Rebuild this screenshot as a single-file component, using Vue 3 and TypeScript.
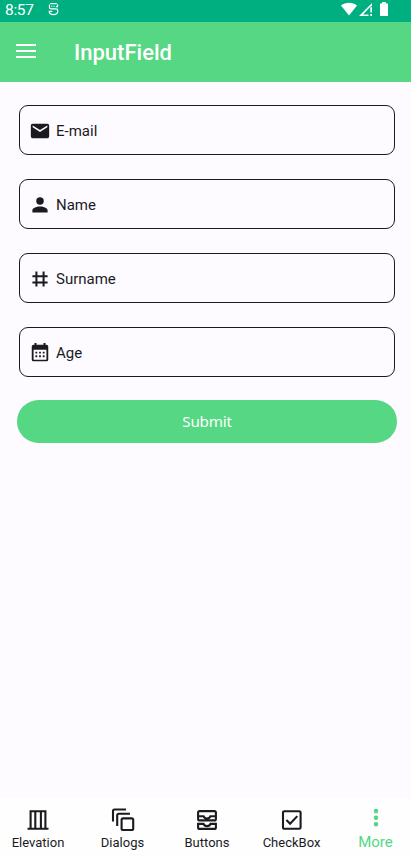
<script setup lang="ts">
interface Field { label: string; icon: string }
interface Tab { label: string; icon: string; outlined?: boolean; active?: boolean }

const fields: Field[] = [
  { label: 'E-mail', icon: 'M20 8l-8 5-8-5V6l8 5 8-5m0-2H4c-1.11 0-2 .89-2 2v12a2 2 0 0 0 2 2h16a2 2 0 0 0 2-2V6a2 2 0 0 0-2-2z' },
  { label: 'Name', icon: 'M12 3.6a4.1 4.1 0 1 1 0 8.2 4.1 4.1 0 0 1 0-8.2zm0 10c4.6 0 8.3 1.9 8.3 4.2v2.4H3.7v-2.4c0-2.3 3.7-4.2 8.3-4.2z' },
  { label: 'Surname', icon: 'M7 3.8h2.2V8h5.6V3.8H17V8h3.3v2.2H17v4.6h3.3V17H17v3.2h-2.2V17H9.2v3.2H7V17H3.7v-2.2H7v-4.6H3.7V8H7zm2.2 6.4v4.6h5.6v-4.6z' },
  { label: 'Age', icon: 'M19 19.3H5V8.5h14M19 3h-1V1h-2.2v2H8.2V1H6v2H5a2 2 0 0 0-2 2v14a2 2 0 0 0 2 2h14a2 2 0 0 0 2-2V5a2 2 0 0 0-2-2zM7 10.5h2v2H7zm4 0h2v2h-2zm4 0h2v2h-2zM7 14.5h2v2H7zm4 0h2v2h-2zm4 0h2v2h-2z' },
]

const tabs: Tab[] = [
  { label: 'Elevation', outlined: true, icon: 'M1.5 20.8h21M4.6 20V3.2h14.8V20M9.3 3v17M14.9 3v17' },
  { label: 'Dialogs', outlined: true, icon: 'M2 13.5V3a1.5 1.5 0 0 1 1.5-1.5H15M6.2 18V7.3a1.6 1.6 0 0 1 1.6-1.6H19M12.2 10.4h8.4a1.6 1.6 0 0 1 1.6 1.6v8.4a1.6 1.6 0 0 1-1.6 1.6h-8.4a1.6 1.6 0 0 1-1.6-1.6V12a1.6 1.6 0 0 1 1.6-1.6z' },
  { label: 'Buttons', outlined: true, icon: 'M4.6 3.1h14.8a1.5 1.5 0 0 1 1.5 1.5v6.3a1.5 1.5 0 0 1-1.5 1.5H4.6a1.5 1.5 0 0 1-1.5-1.5V4.6a1.5 1.5 0 0 1 1.5-1.5zM3.1 8.2h5.4c.5 1.5 1.7 2.3 3.5 2.3s3-.8 3.5-2.3h5.4M3.1 15.9h5.4c.5 1.5 1.7 2.2 3.5 2.2s3-.7 3.5-2.2h5.4v3.5a1.5 1.5 0 0 1-1.5 1.5H4.6a1.5 1.5 0 0 1-1.5-1.5z' },
  { label: 'CheckBox', outlined: true, icon: 'M4.4 3.2h14.8a1.4 1.4 0 0 1 1.4 1.4v14.8a1.4 1.4 0 0 1-1.4 1.4H4.4a1.4 1.4 0 0 1-1.4-1.4V4.6a1.4 1.4 0 0 1 1.4-1.4zM6.4 12l3.7 3.7 7.2-7.6' },
  { label: 'More', active: true, icon: 'M12 2.8a2.3 2.3 0 1 1 0 4.6 2.3 2.3 0 0 1 0-4.6zm0 6.6a2.3 2.3 0 1 1 0 4.6 2.3 2.3 0 0 1 0-4.6zm0 6.6a2.3 2.3 0 1 1 0 4.6 2.3 2.3 0 0 1 0-4.6z' },
]
</script>

<template>
  <div class="screen">
    <div class="status">
      <span class="time">8:57</span>
      <svg class="notification" viewBox="0 0 12 14" fill="none" stroke="currentColor">
        <path d="M2.5 1.2h7M1.6 2.2v3.1c0 1 .7 1.6 1.7 1.6h5.4c1.4 0 2 .8 2 2 0 2.8-1.7 4.2-4.7 4.2s-4.5-1.2-4.7-3.5h3.4M10.4 1.8v2.6H8.6" stroke-width="1.3" />
        <path d="M3.6 4h1.2M6 4h1.2" stroke-width="1.1" />
      </svg>
      <svg class="indicators" viewBox="0 0 48 15" fill="currentColor">
        <path d="M0 4.6C4.5.9 11.5.9 16 4.6L8 14.5z" />
        <path d="M18 15 31 2v3.2h-1.2L22 13.4h5.5V15z" />
        <path d="M29.3 6.2H31v5.4h-1.7zm0 6.9H31V15h-1.7z" />
        <path d="M39 2.5h2.2V1h3.6v1.5H47V15h-8z" />
      </svg>
    </div>

    <header class="toolbar">
      <svg class="menu" viewBox="0 0 20 14"><path d="M0 0h20v2H0zm0 6h20v2H0zm0 6h20v2H0z" fill="currentColor" /></svg>
      <h1>InputField</h1>
    </header>

    <main>
      <label v-for="field in fields" :key="field.label" class="field">
        <svg viewBox="0 0 24 24"><path :d="field.icon" fill="currentColor" fill-rule="evenodd" /></svg>
        <span>{{ field.label }}</span>
      </label>
      <button type="button">Submit</button>
    </main>

    <nav>
      <a v-for="tab in tabs" :key="tab.label" :class="['tab', { active: tab.active }]">
        <svg viewBox="0 0 24 24" :class="{ outlined: tab.outlined }"><path :d="tab.icon" /></svg>
        <span>{{ tab.label }}</span>
      </a>
    </nav>
  </div>
</template>

<style>
body { background: #fdfbff; }
</style>

<style scoped>
.screen {
  box-sizing: border-box;
  width: 100%;
  height: 858px;
  display: flex;
  flex-direction: column;
  overflow: hidden;
  background: #fdfbff;
  color: #1b1b1f;
  font-family: Roboto, sans-serif;
}
.status {
  flex: none;
  height: 22px;
  display: flex;
  align-items: flex-start;
  padding: 0 22px 0 5px;
  box-sizing: border-box;
  background: #00af80;
  color: #fff;
}
.time { width: 43px; font-size: 15.5px; line-height: 20px; letter-spacing: -0.3px; }
.notification { width: 11px; height: 14px; margin-top: 2px; }
.indicators { width: 48px; height: 15px; margin: 1px 0 0 auto; }
.toolbar {
  flex: none;
  height: 60px;
  display: flex;
  align-items: center;
  padding-left: 16px;
  background: #55d783;
  color: #fff;
}
.menu { width: 20px; height: 14px; margin: 0 38px 2px 0; }
h1 { margin: 2px 0 0; font-size: 22px; font-weight: 500; line-height: 28px; }
main {
  flex: 1;
  display: flex;
  flex-direction: column;
  padding: 23px 16px 0 19px;
}
.field {
  box-sizing: border-box;
  height: 50px;
  display: flex;
  align-items: center;
  gap: 5px;
  margin-bottom: 24.15px;
  padding-left: 9px;
  border: 1px solid #1b1b1f;
  border-radius: 9px;
  font-size: 15px;
}
.field svg { width: 22px; height: 22px; margin-top: 1.2px; }
.field span { line-height: 20px; padding-top: 1.4px; }
button {
  height: 43px;
  margin: -1.6px -1.6px 0;
  padding: 0;
  border: 0;
  border-radius: 22px;
  background: #55d783;
  color: #fff;
  font: 15.2px/43px "Noto Sans", sans-serif;
  letter-spacing: -0.2px;
}
nav {
  flex: none;
  height: 60px;
  display: grid;
  grid-template-columns: 76px 93px 76px 93px 75px;
  background: #fefefe;
}
.tab { display: flex; flex-direction: column; align-items: center; }
.tab svg { width: 24px; height: 24px; margin-top: 10px; fill: currentColor; }
.tab svg.outlined { fill: none; stroke: currentColor; stroke-width: 2.1; }
.tab span { font-size: 13px; line-height: 18px; margin-top: 2px; letter-spacing: 0; white-space: nowrap; }
.tab.active { color: #55d783; }
.tab.active svg { margin-top: 8px; }
.tab.active span { font-size: 15px; margin-top: 3px; }
</style>
